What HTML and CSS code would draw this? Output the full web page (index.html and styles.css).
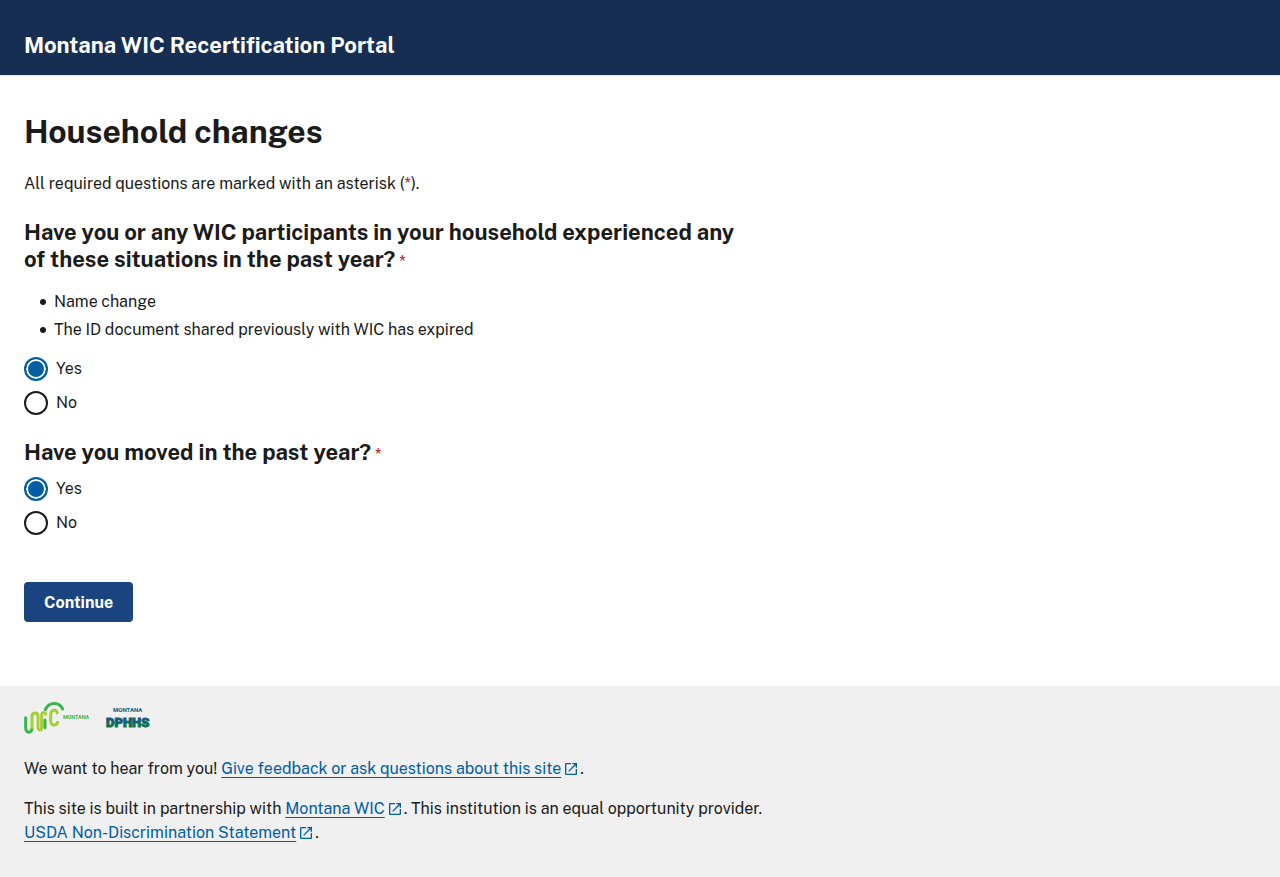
FILE: index.html
```html
<!DOCTYPE html>
<html lang="en">
<head>
<meta charset="utf-8">
<meta name="viewport" content="width=device-width, initial-scale=1">
<title>Household changes | Montana WIC Recertification Portal</title>
<link rel="stylesheet" href="styles.css">
</head>
<body>
<svg class="sprite" aria-hidden="true">
  <symbol id="launch" viewBox="0 0 24 24"><path d="M19 19H5V5h7V3H5a2 2 0 0 0-2 2v14a2 2 0 0 0 2 2h14c1.1 0 2-.9 2-2v-7h-2v7zM14 3v2h3.59l-9.83 9.83 1.41 1.41L19 6.41V10h2V3h-7z"/></symbol>
</svg>
<header class="header">
  <div class="site-title">Montana WIC Recertification Portal</div>
</header>
<main class="main">
  <h1 class="page-title">Household changes</h1>
  <p class="intro">All required questions are marked with an asterisk (<abbr class="required">*</abbr>).</p>
  <form class="form">
    <fieldset class="question">
      <legend class="legend">Have you or any WIC participants in your household experienced any of these situations in the past year?<abbr class="required mark">*</abbr></legend>
      <ul class="situations">
        <li class="situation">Name change</li>
        <li class="situation">The ID document shared previously with WIC has expired</li>
      </ul>
      <div class="options">
        <label class="option"><input class="radio" type="radio" name="change" value="yes" checked>Yes</label>
        <label class="option"><input class="radio" type="radio" name="change" value="no">No</label>
      </div>
    </fieldset>
    <fieldset class="question">
      <legend class="legend">Have you moved in the past year?<abbr class="required mark">*</abbr></legend>
      <div class="options">
        <label class="option"><input class="radio" type="radio" name="moved" value="yes" checked>Yes</label>
        <label class="option"><input class="radio" type="radio" name="moved" value="no">No</label>
      </div>
    </fieldset>
    <button class="button" type="button">Continue</button>
  </form>
</main>
<footer class="footer">
  <div class="logos">
    <svg class="wic-logo" viewBox="0 0 195 96" role="img" aria-label="Montana WIC">
      <g fill="none" stroke-width="9" stroke-linecap="round">
        <path stroke="#39b54a" d="M5 47V79C5 94 24 95 24 78"/>
        <path stroke="#a6ce39" d="M24 76V38M24 42C26 30 42 30 42 42V74C42 88 53 87 53 74V40C53 29 64 29 65 37"/>
        <path stroke="#39b54a" d="M63 54V77"/>
        <path stroke="#a6ce39" d="M100 33C97 19 80 23 80 38V56C80 72 97 73 101 61"/>
        <path stroke="#39b54a" d="M64 23C76 -2 106 0 116 21"/>
      </g>
      <text class="wic-state" x="117" y="51">MONTANA</text>
    </svg>
    <svg class="dphhs-logo" viewBox="0 0 45 32" role="img" aria-label="Montana DPHHS">
      <defs><linearGradient id="hills" x1="0" y1="0" x2="0.12" y2="1"><stop offset="0.45" stop-color="#155a7c"/><stop offset="0.6" stop-color="#087253"/></linearGradient></defs>
      <text class="dphhs-state" x="8" y="10">MONTANA</text>
      <text class="dphhs-name" x="1" y="25" fill="url(#hills)" stroke="url(#hills)">DPHHS</text>
    </svg>
  </div>
  <p class="note">We want to hear from you! <a class="link" href="#">Give feedback or ask questions about this site</a><svg class="launch" aria-hidden="true"><use href="#launch"/></svg>.</p>
  <p class="note">This site is built in partnership with <a class="link" href="#">Montana WIC</a><svg class="launch" aria-hidden="true"><use href="#launch"/></svg>. This institution is an equal opportunity provider. <a class="link" href="#">USDA Non-Discrimination Statement</a><svg class="launch" aria-hidden="true"><use href="#launch"/></svg>.</p>
</footer>
</body>
</html>
```
FILE: styles.css
```css
* { box-sizing: border-box; }
body {
  margin: 0;
  min-height: 100vh;
  display: flex;
  flex-direction: column;
  background: #fff;
  color: #1b1b1b;
  font-family: "Public Sans", Inter, "Liberation Sans", sans-serif;
  font-size: 16px;
  line-height: 24px;
}
.sprite { display: none; }
.header {
  padding: 32px 24px 16px;
  background: #162e51;
  border-bottom: 1px solid #dfe1e2;
  color: #fff;
}
.site-title { font-size: 22px; line-height: 27px; font-weight: 700; }
.main { flex: 1; padding: 36px 24px 64px; }
.page-title { margin: 0; font-size: 32px; line-height: 40px; font-weight: 700; }
.intro { margin: 20px 0 23px; }
.required { color: #b50909; text-decoration: none; }
.mark { margin-left: 4px; font-size: 16px; font-weight: 400; line-height: 16px; }
.form { max-width: 720px; }
.question { margin: 0 0 24px; padding: 0; border: 0; min-width: 0; }
.legend { padding: 0; font-size: 22px; line-height: 27px; font-weight: 700; }
.situations {
  display: grid;
  gap: 4px;
  margin: 0;
  padding: 17px 0 15px 16px;
  list-style: none;
}
.situation { display: flex; align-items: center; gap: 8px; }
.situation::before {
  content: "";
  width: 6px;
  height: 6px;
  border-radius: 50%;
  background: #1b1b1b;
}
.options { display: grid; gap: 10px; }
.legend + .options { margin-top: 11px; }
.option { display: flex; align-items: center; gap: 8px; width: max-content; }
.radio {
  appearance: none;
  width: 24px;
  height: 24px;
  margin: 0;
  border: 2px solid #1b1b1b;
  border-radius: 50%;
  background: #fff;
}
.radio:checked { border-color: #005ea2; background: #005ea2; box-shadow: inset 0 0 0 2px #fff; }
.button {
  display: block;
  margin-top: 47px;
  padding: 9px 20px 7px;
  border: 0;
  border-radius: 4px;
  background: #1a4480;
  color: #fff;
  font: inherit;
  font-weight: 700;
}
.footer { padding: 16px 24px; background: #f0f0f0; }
.logos { display: flex; gap: 16px; height: 32px; }
.wic-logo { width: 65px; height: 32px; }
.wic-state { font: 700 16px Roboto, sans-serif; fill: #39b54a; }
.dphhs-logo { width: 45px; height: 32px; }
.dphhs-state { font: 700 6px Roboto, sans-serif; fill: #155a7c; }
.dphhs-name { font: 900 13px Roboto, sans-serif; stroke-width: 1px; }
.note { max-width: 752px; margin: 23px 0 16px; }
.note + .note { margin-top: 16px; margin-bottom: 16px; }
.link { color: #005ea2; text-decoration: underline; text-decoration-thickness: 1px; text-underline-offset: 3px; }
.launch { width: 16px; height: 16px; margin: 0 1px 0 2px; fill: #005ea2; vertical-align: -3px; }
```
